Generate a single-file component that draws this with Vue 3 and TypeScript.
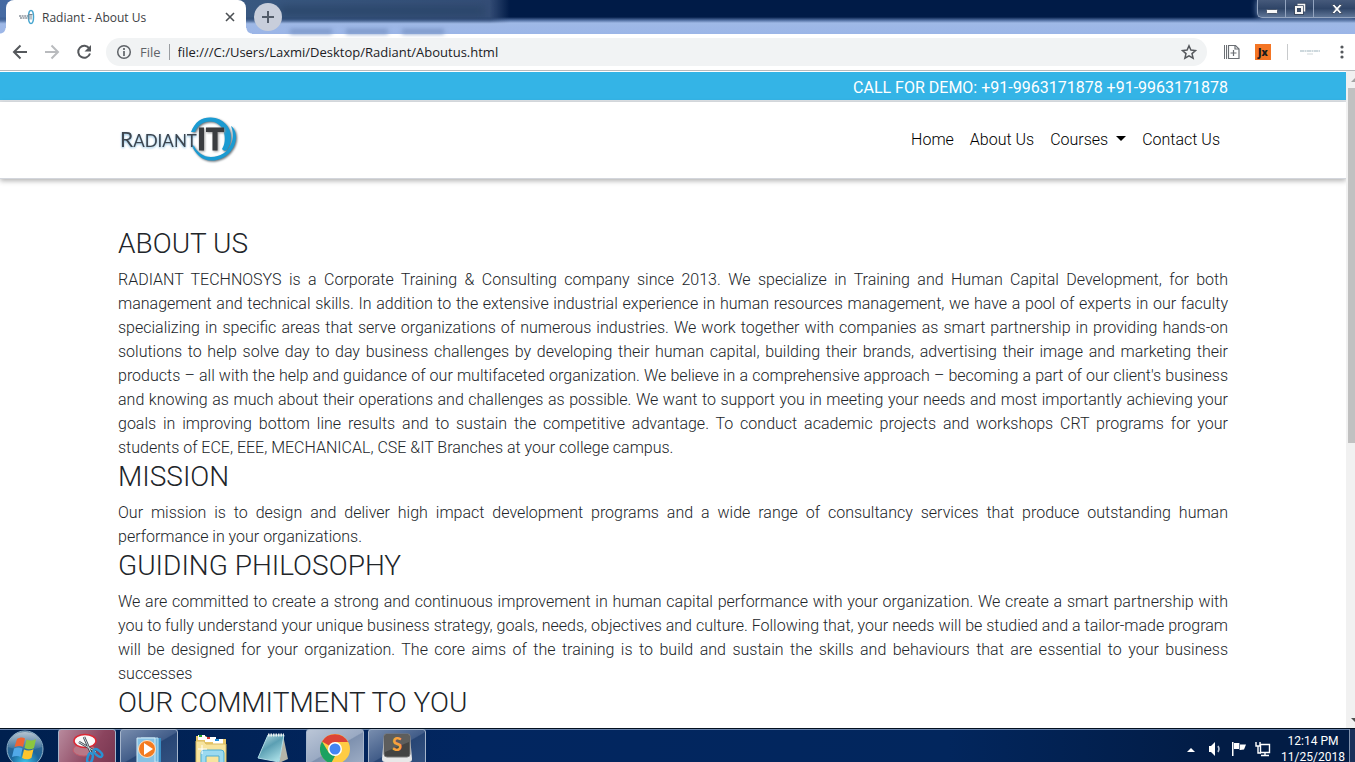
<script setup lang="ts">
import { ref } from 'vue'

interface Section {
  title: string
  body: string
}

const address = ref('file:///C:/Users/Laxmi/Desktop/Radiant/Aboutus.html')

const sections: Section[] = [
  {
    title: 'ABOUT US',
    body: "RADIANT TECHNOSYS is a Corporate Training & Consulting company since 2013. We specialize in Training and Human Capital Development, for both management and technical skills. In addition to the extensive industrial experience in human resources management, we have a pool of experts in our faculty specializing in specific areas that serve organizations of numerous industries. We work together with companies as smart partnership in providing hands-on solutions to help solve day to day business challenges by developing their human capital, building their brands, advertising their image and marketing their products – all with the help and guidance of our multifaceted organization. We believe in a comprehensive approach – becoming a part of our client's business and knowing as much about their operations and challenges as possible. We want to support you in meeting your needs and most importantly achieving your goals in improving bottom line results and to sustain the competitive advantage. To conduct academic projects and workshops CRT programs for your students of ECE, EEE, MECHANICAL, CSE &IT Branches at your college campus.",
  },
  {
    title: 'MISSION',
    body: 'Our mission is to design and deliver high impact development programs and a wide range of consultancy services that produce outstanding human performance in your organizations.',
  },
  {
    title: 'GUIDING PHILOSOPHY',
    body: 'We are committed to create a strong and continuous improvement in human capital performance with your organization. We create a smart partnership with you to fully understand your unique business strategy, goals, needs, objectives and culture. Following that, your needs will be studied and a tailor-made program will be designed for your organization. The core aims of the training is to build and sustain the skills and behaviours that are essential to your business successes',
  },
  { title: 'OUR COMMITMENT TO YOU', body: '' },
]
</script>

<template>
  <div class="screen">
    <header class="strip">
      <div class="ghost" aria-hidden="true">
        <i class="ghost-title"></i>
      </div>
      <div class="ghost-menu" aria-hidden="true"><i></i><i></i><i></i></div>
      <div class="tab">
        <svg class="favicon" width="18" height="16" viewBox="0 0 18 16" aria-hidden="true">
          <path d="M1 7h9M2 9h8" stroke="#a9aeb5" stroke-width="2" stroke-dasharray="2 .6" />
          <ellipse cx="13" cy="8" rx="2.500" ry="6.500" fill="none" stroke="#46a5cf" stroke-width="1.500" />
          <path d="M11 5.500v5M10.500 5.500h4M13 5.500v5" stroke="#7b858f" stroke-width="1" />
        </svg>
        <span class="tab-title">Radiant - About Us</span>
        <button class="tab-close" type="button" aria-label="Close tab">
          <svg width="10" height="10" viewBox="0 0 10 10"><path d="M1 1l8 8M9 1L1 9" stroke="#4c5054" stroke-width="1.6" /></svg>
        </button>
      </div>
      <button class="new-tab" type="button" aria-label="New tab">
        <svg width="12" height="12" viewBox="0 0 12 12"><path d="M6 0v12M0 6h12" stroke="#525b69" stroke-width="2" /></svg>
      </button>
      <div class="window-buttons">
        <button type="button" aria-label="Minimize">
          <svg width="14" height="12" viewBox="0 0 14 12"><rect x="1.5" y="6.5" width="11" height="4" rx="1" fill="#f7f7f7" stroke="#48566c" /></svg>
        </button>
        <button type="button" aria-label="Restore">
          <svg width="14" height="14" viewBox="0 0 14 14">
            <g fill="none"><path d="M5 2.500h6.500V9" stroke="#3a4960" stroke-width="3.500" /><path d="M3 5h6v6H3z" stroke="#3a4960" stroke-width="4" /><path d="M4.500 2.500h7V9.500" stroke="#f5f5f5" stroke-width="1.500" /><path d="M3 5h6v6H3z" stroke="#f5f5f5" stroke-width="2" /></g>
          </svg>
        </button>
        <button class="close" type="button" aria-label="Close window">
          <svg width="14" height="12" viewBox="0 0 14 12"><path d="M1.500 1.500h3L7 4.200l2.500-2.700h3L8.700 6l3.800 4.500h-3L7 7.800l-2.500 2.700h-3L5.300 6z" fill="#fff" stroke="#45546b" /></svg>
        </button>
      </div>
    </header>

    <div class="toolbar">
      <button class="tool back" type="button" aria-label="Back">
        <svg width="16" height="16" viewBox="0 0 16 16"><path d="M15 8H2.500M8.500 1.500L2 8l6.500 6.500" fill="none" stroke="#55585c" stroke-width="2" /></svg>
      </button>
      <button class="tool forward" type="button" aria-label="Forward">
        <svg width="16" height="16" viewBox="0 0 16 16"><path d="M1 8h12.500M7.500 1.500L14 8l-6.500 6.500" fill="none" stroke="#b9bbbe" stroke-width="2" /></svg>
      </button>
      <button class="tool reload" type="button" aria-label="Reload">
        <svg width="16" height="16" viewBox="0 0 16 16"><path d="M13.300 4.500A6 6 0 1 0 14 9.500" fill="none" stroke="#55585c" stroke-width="2" /><path d="M15 1v6.500H8.500z" fill="#55585c" /></svg>
      </button>
      <div class="omnibox">
        <svg width="16" height="16" viewBox="0 0 16 16" aria-hidden="true"><circle cx="8" cy="8" r="6.300" fill="none" stroke="#5f6368" stroke-width="1.500" /><path d="M8 7v5M8 4v2" stroke="#5f6368" stroke-width="1.700" /></svg>
        <label class="scheme" for="address">File</label>
        <input id="address" v-model="address" type="text" spellcheck="false" />
        <button class="tool" type="button" aria-label="Bookmark this page">
          <svg width="16" height="16" viewBox="0 0 16 16"><path d="M8 1.800l1.900 4.300 4.600.4-3.500 3.100 1.100 4.600L8 11.800l-4.100 2.400L5 9.600 1.500 6.500l4.600-.4z" fill="none" stroke="#55585c" stroke-width="1.500" /></svg>
        </button>
      </div>
      <button class="tool ext" type="button" aria-label="Page collector">
        <svg width="17" height="16" viewBox="0 0 17 16"><g fill="none" stroke="#6b6f74"><path d="M1.500 1v14M3.500 1v14" stroke-width="1" /><path d="M5.500 1.500h7l3.500 3.500v9.500H5.500z" stroke-width="1.200" /><path d="M12 1.500V5h4M10.500 6v6M7.500 9h6" stroke-width="1.200" /></g></svg>
      </button>
      <button class="tool jx" type="button">Jx</button>
      <span class="divider"></span>
      <button class="tool avatar" type="button" aria-label="Profile">
        <svg width="20" height="8" viewBox="0 0 20 8"><path d="M0 3h20" stroke="#cdd8dd" stroke-width="2" stroke-dasharray="4 .5 2 .5" /><path d="M7 6h6" stroke="#dfe4e6" stroke-width="1.500" /></svg>
      </button>
      <button class="tool" type="button" aria-label="Menu">
        <svg width="4" height="14" viewBox="0 0 4 14" fill="#55585c"><circle cx="2" cy="2" r="1.600" /><circle cx="2" cy="7" r="1.600" /><circle cx="2" cy="12" r="1.600" /></svg>
      </button>
    </div>

    <div class="viewport">
      <main class="page">
        <div class="callbar"><div class="container">CALL FOR DEMO: +91-9963171878 +91-9963171878</div></div>
        <div class="site-header">
          <div class="container header-row">
            <a class="brand" href="#" aria-label="Radiant IT">
              <svg width="124" height="56" viewBox="0 0 124 56">
                <g class="logo-ring" fill="#1b9bd2">
                  <path d="M73 20C77 9 85 5 93 5.500C105 6 113 15 113 25C113 31 111 35 109 38Q106 40 104 37C107 32 107 28 106.500 23C105 14 99 9.500 92 9.500C85 9.500 80 13 77 20z" />
                  <path d="M73 32C77 42 84 48.500 93 48.500C107 49 118 37 118 25C118 20 116 16 113 14C115 19 116 26 113 32C110 40 102 45 93 45C85 45 79 40 76 34z" />
                </g>
                <g class="logo-word">
                  <text x="2" y="35" font-size="21">R<tspan font-size="17">ADIANT</tspan></text>
                </g>
                <text class="logo-it" x="79" y="38" font-size="30">IT</text>
              </svg>
            </a>
            <nav>
              <a href="#">Home</a>
              <a href="#">About Us</a>
              <a class="dropdown" href="#">Courses</a>
              <a href="#">Contact Us</a>
            </nav>
          </div>
        </div>
        <article class="container content">
          <section v-for="s in sections" :key="s.title">
            <h3>{{ s.title }}</h3>
            <p v-if="s.body">{{ s.body }}</p>
          </section>
        </article>
      </main>
      <div class="scrollbar" aria-hidden="true">
        <div class="arrow"><svg width="8" height="4" viewBox="0 0 8 4"><path d="M0 4l4-4 4 4z" fill="#a3a3a3" /></svg></div>
        <div class="track"><div class="thumb"></div></div>
        <div class="arrow"><svg width="8" height="4" viewBox="0 0 8 4"><path d="M0 0l4 4 4-4z" fill="#505050" /></svg></div>
      </div>
    </div>

    <footer class="taskbar">
      <button class="orb" type="button" aria-label="Start">
        <svg width="40" height="40" viewBox="0 0 40 40">
          <defs>
            <radialGradient id="orb" cx=".5" cy=".9" r=".9"><stop offset="0" stop-color="#39c7ee" /><stop offset=".45" stop-color="#1c659b" /><stop offset="1" stop-color="#466b8c" /></radialGradient>
            <linearGradient id="shine" x2="0" y2="1"><stop offset="0" stop-color="#fff" stop-opacity=".6" /><stop offset="1" stop-color="#fff" stop-opacity=".05" /></linearGradient>
          </defs>
          <circle cx="20" cy="20" r="18" fill="url(#orb)" stroke="#8fb2ca" />
          <path d="M3 18C4 7 12 3 20 3s16 4 17 15c-11 4-23 4-34 0z" fill="url(#shine)" />
          <path d="M12 10c3-2 6-2 8-.5l-2 8.500c-2-1.500-5-1.500-8.500 0z" fill="#ee6534" />
          <path d="M21.500 10.500c3 1.500 6 1.500 9.500-.5l-2 9c-3 2-6 1.500-9.500 0z" fill="#8cc63f" />
          <path d="M9 19.500c3-1.500 6-1.500 8.500 0l-2 8.500c-2-1.500-5-1.500-8.500 0z" fill="#51a9e8" />
          <path d="M19 20.500c3 1.500 6 1.500 9.500-.2l-2 8.500c-3 2-6 2-9.500.2z" fill="#fdc52d" />
        </svg>
      </button>
      <div class="tasks">
        <button class="task snip" type="button" aria-label="Snipping Tool">
          <svg width="34" height="34" viewBox="0 0 34 34">
            <ellipse cx="14" cy="18" rx="11" ry="6" fill="#b87887" stroke="#c45a6a" />
            <ellipse cx="15" cy="9" rx="11" ry="6.500" fill="#fafafa" stroke="#dc2734" stroke-width="1.500" />
            <path d="M14 5l8 18M9 10l17 10" stroke="#3b454d" stroke-width="2.500" /><path d="M14 5l8 18M9 10l17 10" stroke="#cbd4da" stroke-width="1" />
            <ellipse cx="20" cy="26" rx="2.500" ry="5" fill="none" stroke="#2893d4" stroke-width="2.500" transform="rotate(15 20 26)" />
            <ellipse cx="28" cy="21" rx="2.500" ry="5" fill="none" stroke="#2893d4" stroke-width="2.500" transform="rotate(-50 28 21)" />
          </svg>
        </button>
        <button class="task open" type="button" aria-label="Media Player">
          <svg width="34" height="34" viewBox="0 0 34 34">
            <path d="M12 6h17v24H12z" fill="#3c8ec4" /><path d="M9 6h17v24H9z" fill="#73b9df" stroke="#b4def2" /><path d="M5 6h18v25H5z" fill="#86c2e4" stroke="#d4ecf7" />
            <circle cx="15" cy="17" r="8.500" fill="#f47b20" stroke="#ffe3c6" /><path d="M12 11v12l9-6z" fill="#fff" />
          </svg>
        </button>
        <button class="task" type="button" aria-label="File Explorer">
          <svg width="34" height="34" viewBox="0 0 34 34">
            <path d="M2 4h10l2 3h18v25H2z" fill="#e9c869" /><path d="M4 3h7v5H4z" fill="#fff" /><path d="M5 3h3v2H5z" fill="#24a62a" /><path d="M11 5h11v5H11z" fill="#fff" /><path d="M13 5h3v2h-3z" fill="#d73e35" /><path d="M19 7h10v5H19z" fill="#fff" /><path d="M21 7h4v2h-4z" fill="#1d8dd8" />
            <path d="M2 9h8l2 3h20v21H2z" fill="#f7e49e" stroke="#d9ba61" /><path d="M7 21q0-3 3-3h17q3 0 3 3v13h-5V24H12v10H7z" fill="#9bdaf0" stroke="#4dadd2" /><path d="M8 13v9M4 17h9" stroke="#fff" />
          </svg>
        </button>
        <button class="task" type="button" aria-label="Notepad">
          <svg width="34" height="34" viewBox="0 0 34 34">
            <defs><linearGradient id="pad" x2=".6" y2="1"><stop offset="0" stop-color="#c6e4e9" /><stop offset=".5" stop-color="#5b9fb3" /><stop offset="1" stop-color="#a5dbe3" /></linearGradient></defs>
            <path d="M27 3l5 24-9 4z" fill="#b5b5a9" /><path d="M12 3h16l-5 27L2 26z" fill="url(#pad)" stroke="#afdae4" /><path d="M12 3h16" stroke="#e9eff0" stroke-width="3" stroke-dasharray="1.500 1" />
          </svg>
        </button>
        <button class="task open bright" type="button" aria-label="Chrome">
          <svg width="34" height="34" viewBox="0 0 34 34">
            <circle cx="17" cy="17" r="15" fill="#fc4" /><path d="M17 17L4 9.500A15 15 0 0 1 30 10H17z" fill="#dc4437" /><path d="M4 9.500L11 21l6 3-4 7.500A15 15 0 0 1 4 9.500z" fill="#1ba261" /><circle cx="17" cy="17" r="7" fill="#fff" /><circle cx="17" cy="17" r="5.500" fill="#4385f4" />
          </svg>
        </button>
        <button class="task open" type="button" aria-label="Sublime Text">
          <svg width="34" height="34" viewBox="0 0 34 34">
            <path d="M4 4q0-2 2-2h22q2 0 2 2l2 23q0 3-3 3H5q-3 0-3-3z" fill="#e8e8e8" /><path d="M4 4q0-2 2-2h22q2 0 2 2v18q0 3-3 3H7q-3 0-3-3z" fill="#444443" stroke="#777" /><path d="M5 3h24v7L5 20z" fill="#777" opacity=".5" />
            <text class="sublime" x="12" y="19" font-size="18">S</text>
          </svg>
        </button>
      </div>
      <div class="tray">
        <svg width="8" height="5" viewBox="0 0 8 5" aria-hidden="true"><path d="M0 5l4-4 4 4z" fill="#fff" /></svg>
        <svg width="16" height="16" viewBox="0 0 16 16" aria-hidden="true"><path d="M2 5h2l4-4v14l-4-4H2z" fill="#fff" /><path d="M11 5q2 3 0 6" fill="none" stroke="#bac6d8" stroke-width="1.500" /></svg>
        <svg width="16" height="16" viewBox="0 0 16 16" aria-hidden="true"><path d="M1 1h1.500v14H1z" fill="#fff" /><path d="M3 2h5l1 1.500h6l-2 5-4 .5-1-1H3z" fill="#fff" /><path d="M8.500 2v7" stroke="#637491" /></svg>
        <svg width="16" height="16" viewBox="0 0 16 16" aria-hidden="true"><path d="M5.500 3.500h9v8h-9zM10 12v2M6 14.500h8" fill="none" stroke="#fff" stroke-width="1.400" /><path d="M1 1v4h4V1M3 5v7h3" fill="none" stroke="#fff" stroke-width="1.400" /></svg>
      </div>
      <time class="clock"><span>12:14 PM</span><span>11/25/2018</span></time>
      <button class="show-desktop" type="button" aria-label="Show desktop"></button>
    </footer>
  </div>
</template>

<style>
html,
body {
  overflow: hidden;
}
</style>

<style scoped>
* {
  box-sizing: border-box;
}
.screen {
  display: flex;
  flex-direction: column;
  height: 100vh;
  overflow: hidden;
  font-family: "Open Sans", "Noto Sans", sans-serif;
  font-size: 12px;
}
button {
  padding: 0;
  border: 0;
  background: none;
  font: inherit;
}
svg {
  display: block;
  flex: none;
}

/* Tab strip */
.strip {
  position: relative;
  display: flex;
  flex: none;
  height: 34px;
  padding-left: 6px;
  background: linear-gradient(#001b47 0, #001b47 17px, #4d6a9c 20px, #9fb9e6 23px, #9bb5e7 34px);
}
.ghost {
  position: absolute;
  inset: 0 auto 0 0;
  width: 510px;
  overflow: hidden;
  background: linear-gradient(90deg, #466ba3 0, #38577f 50%, #344d76 96%, transparent);
  mask-image: linear-gradient(#000 17px, transparent 24px);
}
.ghost-title {
  display: block;
  width: 205px;
  height: 8px;
  margin: 7px 0 0 280px;
  background: #294467;
  filter: blur(4px);
}
.ghost-menu {
  position: absolute;
  bottom: 0;
  left: 290px;
  display: flex;
  gap: 14px;
  filter: blur(2px);
}
.ghost-menu i {
  width: 42px;
  height: 5px;
  background: #7d98c8;
}
.tab {
  position: relative;
  display: flex;
  align-items: center;
  width: 240px;
  padding: 0 10px 0 12px;
  border-radius: 8px 8px 0 0;
  background: #fff;
}
.tab::before,
.tab::after {
  content: "";
  position: absolute;
  bottom: 0;
  width: 6px;
  height: 6px;
}
.tab::before {
  right: 100%;
  background: radial-gradient(circle at 0 0, transparent 5px, #fff 6px);
}
.tab::after {
  left: 100%;
  background: radial-gradient(circle at 100% 0, transparent 5px, #fff 6px);
}
.tab-title {
  flex: 1;
  margin-left: 6px;
  color: #3c4043;
  white-space: nowrap;
}
.tab-close {
  padding: 1px;
}
.new-tab {
  position: relative;
  display: grid;
  place-items: center;
  width: 28px;
  height: 28px;
  margin: 3px 0 0 8px;
  border-radius: 50%;
  background: #c8cedb;
}
.window-buttons {
  display: flex;
  height: 18px;
  margin-left: auto;
  border: 1px solid #93a4bf;
  border-width: 0 0 1px 1px;
  border-radius: 0 0 0 5px;
  background: linear-gradient(#465a7b, #2f4568 50%, #5e7596);
  box-shadow: 0 0 6px #7893bd;
}
.window-buttons button {
  display: grid;
  place-items: center;
  width: 28px;
  border-right: 1px solid #93a4bf;
}
.window-buttons .close {
  width: 41px;
  padding-right: 4px;
  padding-left: 8px;
  border: 0;
}

/* Toolbar */
.toolbar {
  display: flex;
  flex: none;
  align-items: center;
  height: 37px;
  padding: 0 11px 0 12px;
  border-bottom: 1px solid #b8b9bc;
  background: #fff;
}
.forward,
.reload {
  margin-left: 16px;
}
.omnibox {
  display: flex;
  flex: 1;
  align-items: center;
  height: 28px;
  margin-left: 14px;
  padding: 0 10px;
  border-radius: 14px;
  background: #f1f3f4;
  font-size: 13px;
}
.scheme {
  margin-left: 8px;
  padding-right: 8px;
  border-right: 1px solid #9a9da1;
  color: #5f6368;
  line-height: 16px;
}
.omnibox input {
  flex: 1;
  min-width: 0;
  padding: 0 8px;
  border: 0;
  outline: 0;
  background: none;
  color: #202124;
  font: inherit;
}
.ext {
  margin-left: 16px;
}
.jx {
  width: 16px;
  height: 16px;
  margin-left: 15px;
  background: #f47524;
  color: #1c1c1c;
  font-size: 10px;
  font-weight: 800;
  line-height: 16px;
}
.divider {
  width: 1px;
  height: 16px;
  margin: 0 12px 0 16px;
  background: #c8cacc;
}
.avatar {
  margin-right: 20px;
}

/* Web page */
.viewport {
  display: flex;
  flex: 1;
  min-height: 0;
  background: #fff;
}
.page {
  flex: 1;
  min-width: 0;
  overflow: hidden;
  padding-top: 1px;
  color: #212529;
  font-family: Roboto, sans-serif;
  font-size: 16px;
  font-weight: 300;
  line-height: 24px;
}
.container {
  max-width: 1140px;
  margin: 0 auto;
  padding: 0 15px;
}
.callbar {
  padding-top: 4px;
  border-bottom: 2px solid #dee2e6;
  background: #34b4e6;
  color: #fff;
  font-weight: 400;
  text-align: right;
}
.site-header {
  border-bottom: 1px solid #d3d6dc;
  box-shadow: 0 2px 5px #0000004d;
}
.header-row {
  display: flex;
  align-items: center;
  justify-content: space-between;
  height: 76px;
}
.logo-ring {
  filter: drop-shadow(1px 1px 1px #5d6870);
}
.logo-word {
  fill: #3d4650;
  font-family: Lato, sans-serif;
  font-weight: 400;
  filter: drop-shadow(0 1px 1px #7fb8dd);
}
.logo-it {
  fill: #3b3d40;
  font-family: Lato, sans-serif;
  font-weight: 700;
  stroke: #3b3d40;
  stroke-width: 1px;
  filter: drop-shadow(1px 1px 1px #999);
}
nav {
  display: flex;
}
nav a {
  padding: 8px;
  color: #000;
  text-decoration: none;
}
.dropdown::after {
  content: "";
  display: inline-block;
  margin-left: 8px;
  border: 5px solid transparent;
  border-top-color: #000;
  border-bottom: 0;
  vertical-align: 4px;
}
.content {
  padding-top: 48px;
}
h3 {
  margin: 0 0 8px;
  font-size: 28px;
  font-weight: 300;
  line-height: 33px;
}
p {
  margin: 0;
  text-align: justify;
}
.scrollbar {
  display: flex;
  flex: none;
  flex-direction: column;
  width: 9px;
  overflow: hidden;
  background: #f1f1f1;
}
.arrow {
  display: flex;
  flex: none;
  align-items: center;
  height: 17px;
  padding-left: 5px;
}
.track {
  flex: 1;
  padding-left: 2px;
}
.thumb {
  height: 57%;
  background: #c1c1c1;
}

/* Taskbar */
.taskbar {
  display: flex;
  flex: none;
  height: 34px;
  overflow: hidden;
  border-top: 1px solid #03101f;
  background: linear-gradient(90deg, #00204f, #022660 35%, #02265d 70%, #021c45 90%);
  box-shadow: inset 0 1px #6681aa;
}
.orb {
  height: 40px;
  margin-left: 5px;
}
.tasks {
  display: flex;
  gap: 4px;
  height: 40px;
  margin-left: 13px;
}
.task {
  display: grid;
  place-items: center;
  width: 58px;
  height: 40px;
}
.snip,
.open {
  border: 1px solid #a5b5cb;
  border-radius: 3px;
  background: linear-gradient(150deg, #788dae, #425d89 48%, #284675 50%, #345382);
}
.snip {
  background: linear-gradient(120deg, #b88a9d, #8b445e 60%, #75354f);
}
.bright {
  background: linear-gradient(150deg, #bbc6d7, #9aaac3 48%, #7e91af 50%, #a2b1c8);
}
.sublime {
  fill: #f9a13c;
  font-family: Lato, sans-serif;
  font-weight: 900;
}
.tray {
  display: flex;
  align-items: center;
  gap: 8px;
  height: 40px;
  margin-left: auto;
}
.tray svg:first-child {
  margin-right: 4px;
}
.clock {
  display: flex;
  flex-direction: column;
  align-items: center;
  width: 72px;
  margin-left: 6px;
  padding-top: 4px;
  color: #fff;
  font-family: Roboto, sans-serif;
  line-height: 16px;
}
.clock span {
  flex: none;
}
.show-desktop {
  width: 6px;
  border-left: 1px solid #8192ad;
  background: #1a315a;
}
</style>
